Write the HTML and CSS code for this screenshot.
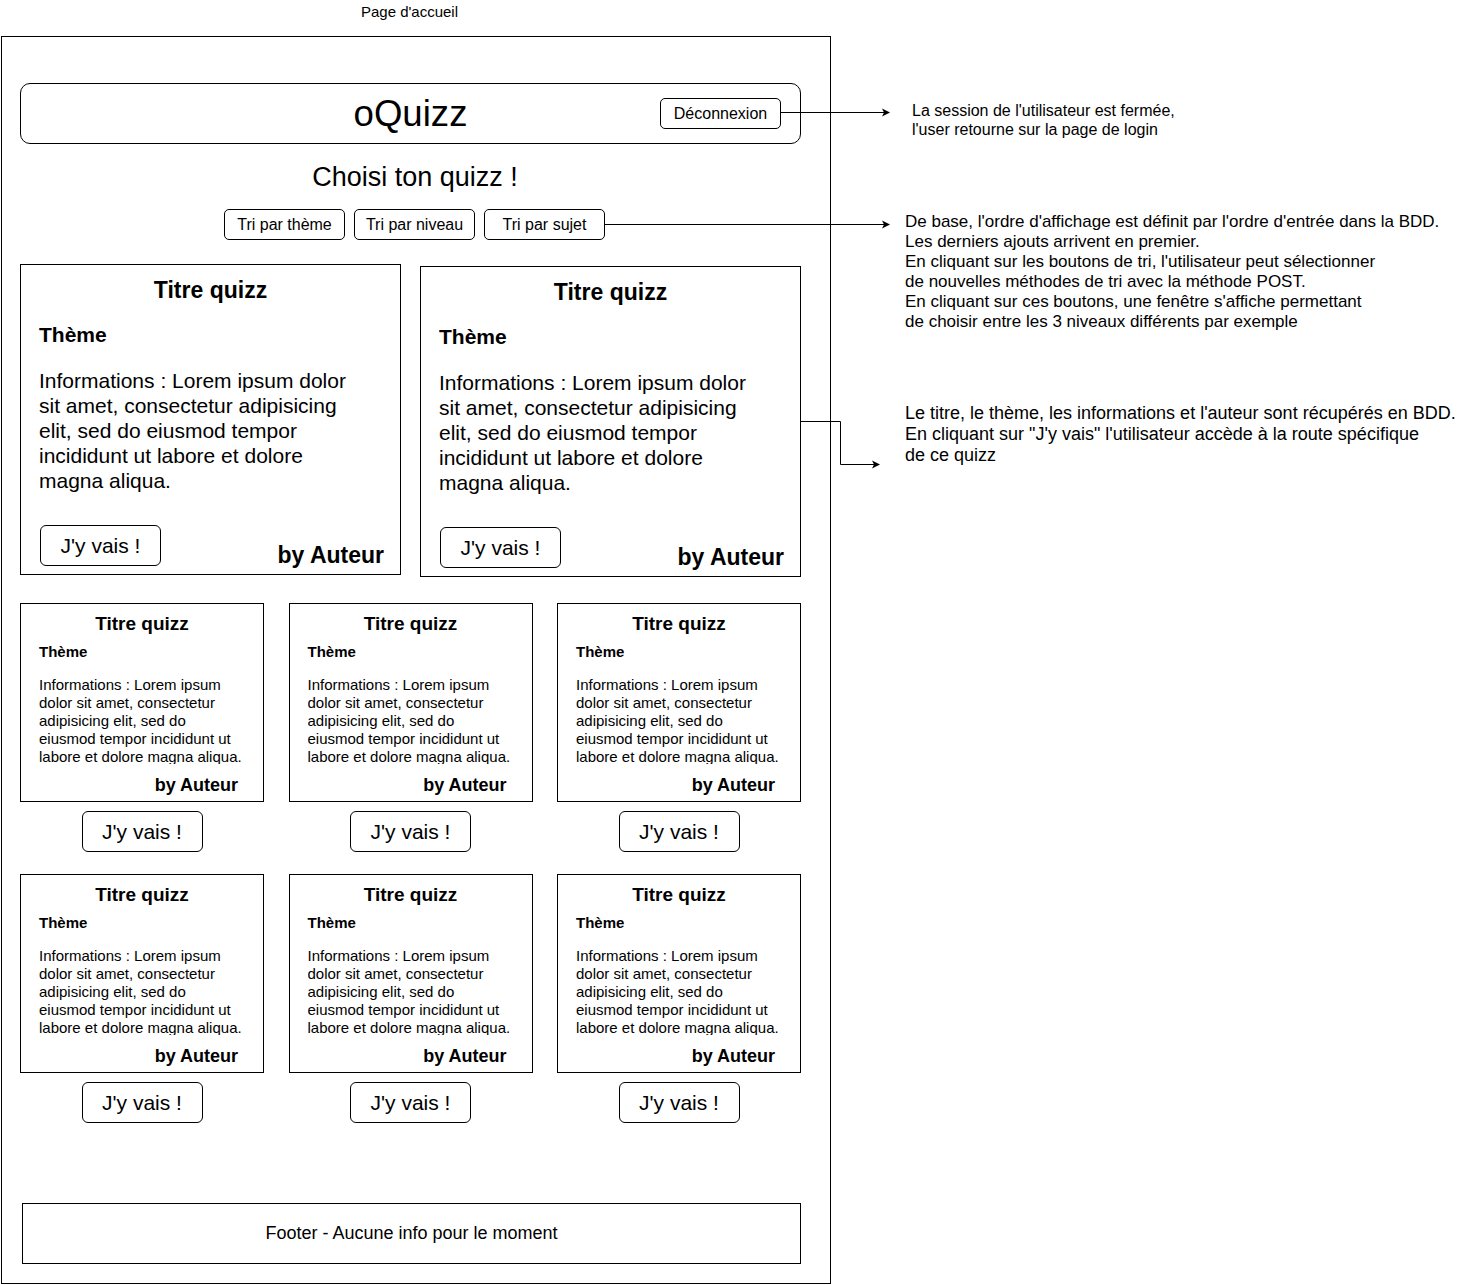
FILE: index.html
```html
<!DOCTYPE html>
<html lang="fr">
<head>
<meta charset="utf-8">
<title>Page d'accueil - oQuizz</title>
<link rel="stylesheet" href="styles.css">
</head>
<body>
<div class="canvas">
  <div class="page-label">Page d'accueil</div>

  <div class="frame">
    <header class="topbar">
      <span class="topbar-spacer"></span>
      <h1 class="logo">oQuizz</h1>
      <button class="btn btn-logout">Déconnexion</button>
    </header>

    <h2 class="choose">Choisi ton quizz !</h2>

    <div class="sorts">
      <button class="btn btn-sort">Tri par thème</button>
      <button class="btn btn-sort">Tri par niveau</button>
      <button class="btn btn-sort">Tri par sujet</button>
    </div>

    <div class="big-row">
      <article class="card-big">
        <h3 class="big-title">Titre quizz</h3>
        <h4 class="big-theme">Thème</h4>
        <p class="big-info">Informations : Lorem ipsum dolor sit amet, consectetur adipisicing elit, sed do eiusmod tempor incididunt ut labore et dolore magna aliqua.</p>
        <div class="big-foot">
          <button class="btn btn-go btn-go-in">J'y vais !</button>
          <span class="big-author">by Auteur</span>
        </div>
      </article>
      <article class="card-big card-big-low">
        <h3 class="big-title">Titre quizz</h3>
        <h4 class="big-theme">Thème</h4>
        <p class="big-info">Informations : Lorem ipsum dolor sit amet, consectetur adipisicing elit, sed do eiusmod tempor incididunt ut labore et dolore magna aliqua.</p>
        <div class="big-foot">
          <button class="btn btn-go btn-go-in">J'y vais !</button>
          <span class="big-author">by Auteur</span>
        </div>
      </article>
    </div>

    <div class="grid">
      <div class="cell">
        <article class="card-small">
          <h3 class="small-title">Titre quizz</h3>
          <h4 class="small-theme">Thème</h4>
          <p class="small-info">Informations : Lorem ipsum dolor sit amet, consectetur adipisicing elit, sed do eiusmod tempor incididunt ut labore et dolore magna aliqua.</p>
          <span class="small-author">by Auteur</span>
        </article>
        <button class="btn btn-go btn-go-out">J'y vais !</button>
      </div>
      <div class="cell">
        <article class="card-small">
          <h3 class="small-title">Titre quizz</h3>
          <h4 class="small-theme">Thème</h4>
          <p class="small-info">Informations : Lorem ipsum dolor sit amet, consectetur adipisicing elit, sed do eiusmod tempor incididunt ut labore et dolore magna aliqua.</p>
          <span class="small-author">by Auteur</span>
        </article>
        <button class="btn btn-go btn-go-out">J'y vais !</button>
      </div>
      <div class="cell">
        <article class="card-small">
          <h3 class="small-title">Titre quizz</h3>
          <h4 class="small-theme">Thème</h4>
          <p class="small-info">Informations : Lorem ipsum dolor sit amet, consectetur adipisicing elit, sed do eiusmod tempor incididunt ut labore et dolore magna aliqua.</p>
          <span class="small-author">by Auteur</span>
        </article>
        <button class="btn btn-go btn-go-out">J'y vais !</button>
      </div>
      <div class="cell">
        <article class="card-small">
          <h3 class="small-title">Titre quizz</h3>
          <h4 class="small-theme">Thème</h4>
          <p class="small-info">Informations : Lorem ipsum dolor sit amet, consectetur adipisicing elit, sed do eiusmod tempor incididunt ut labore et dolore magna aliqua.</p>
          <span class="small-author">by Auteur</span>
        </article>
        <button class="btn btn-go btn-go-out">J'y vais !</button>
      </div>
      <div class="cell">
        <article class="card-small">
          <h3 class="small-title">Titre quizz</h3>
          <h4 class="small-theme">Thème</h4>
          <p class="small-info">Informations : Lorem ipsum dolor sit amet, consectetur adipisicing elit, sed do eiusmod tempor incididunt ut labore et dolore magna aliqua.</p>
          <span class="small-author">by Auteur</span>
        </article>
        <button class="btn btn-go btn-go-out">J'y vais !</button>
      </div>
      <div class="cell">
        <article class="card-small">
          <h3 class="small-title">Titre quizz</h3>
          <h4 class="small-theme">Thème</h4>
          <p class="small-info">Informations : Lorem ipsum dolor sit amet, consectetur adipisicing elit, sed do eiusmod tempor incididunt ut labore et dolore magna aliqua.</p>
          <span class="small-author">by Auteur</span>
        </article>
        <button class="btn btn-go btn-go-out">J'y vais !</button>
      </div>
    </div>

    <footer class="footer">Footer - Aucune info pour le moment</footer>
  </div>

  <svg class="arrows" width="1474" height="1285" viewBox="0 0 1474 1285" aria-hidden="true">
    <g fill="none" stroke="#000" stroke-width="1">
      <path d="M780 112.5 H884"/>
      <path d="M604 224.5 H884"/>
      <path d="M800 421.5 H840.5 V464.5 H874"/>
    </g>
    <g fill="#000">
      <path d="M890 112.5 L882 108.5 L884 112.5 L882 116.5 Z"/>
      <path d="M890 224.5 L882 220.5 L884 224.5 L882 228.5 Z"/>
      <path d="M880 464.5 L872 460.5 L874 464.5 L872 468.5 Z"/>
    </g>
  </svg>

  <p class="note note-1">La session de l'utilisateur est fermée,<br>l'user retourne sur la page de login</p>
  <p class="note note-2">De base, l'ordre d'affichage est définit par l'ordre d'entrée dans la BDD.<br>Les derniers ajouts arrivent en premier.<br>En cliquant sur les boutons de tri, l'utilisateur peut sélectionner<br>de nouvelles méthodes de tri avec la méthode POST.<br>En cliquant sur ces boutons, une fenêtre s'affiche permettant<br>de choisir entre les 3 niveaux différents par exemple</p>
  <p class="note note-3">Le titre, le thème, les informations et l'auteur sont récupérés en BDD.<br>En cliquant sur "J'y vais" l'utilisateur accède à la route spécifique<br>de ce quizz</p>
</div>
</body>
</html>
```

FILE: styles.css
```css
* {
  box-sizing: border-box;
}

html,
body {
  margin: 0;
  padding: 0;
  background: #fff;
}

body {
  font-family: "Liberation Sans", Arial, Helvetica, sans-serif;
  color: #000;
}

.canvas {
  position: relative;
  width: 1474px;
  height: 1285px;
  overflow: hidden;
}

.page-label {
  width: 819px;
  height: 36px;
  padding-top: 3px;
  text-align: center;
  font-size: 15px;
  line-height: 18px;
}

/* ---------- main frame ---------- */
.frame {
  margin-left: 1px;
  width: 830px;
  height: 1248px;
  border: 1px solid #000;
  padding: 46px 0 19px 18px;
  display: flex;
  flex-direction: column;
}

.btn {
  font-family: inherit;
  color: #000;
  background: #fff;
  border: 1px solid #000;
  padding: 0;
  margin: 0;
  cursor: pointer;
}

.topbar {
  width: 781px;
  height: 61px;
  border: 1px solid #000;
  border-radius: 10px;
  display: grid;
  grid-template-columns: 1fr auto 1fr;
  align-items: center;
}

.logo {
  margin: 0;
  font-size: 36.6px;
  font-weight: normal;
  line-height: 42px;
}

.btn-logout {
  justify-self: end;
  margin-right: 19px;
  width: 121px;
  height: 31px;
  border-radius: 5px;
  font-size: 16px;
}

.choose {
  margin: 18px 0 0;
  width: 781px;
  padding-left: 9px;
  text-align: center;
  font-size: 27px;
  font-weight: normal;
  line-height: 31px;
}

.sorts {
  width: 781px;
  margin-top: 16px;
  padding-left: 8px;
  display: flex;
  justify-content: center;
  gap: 9px;
}

.btn-sort {
  width: 121px;
  height: 31px;
  border-radius: 5px;
  font-size: 16px;
}

/* ---------- big cards ---------- */
.big-row {
  margin-top: 24px;
  display: flex;
  align-items: flex-start;
  gap: 19px;
}

.card-big {
  width: 381px;
  height: 311px;
  border: 1px solid #000;
  padding: 11px 16px 0 18px;
  display: flex;
  flex-direction: column;
}

.card-big-low {
  margin-top: 2px;
}

.big-title {
  margin: 0 0 0 -2px;
  text-align: center;
  font-size: 23px;
  font-weight: bold;
  line-height: 28px;
}

.big-theme {
  margin: 18px 0 0;
  font-size: 21px;
  font-weight: bold;
  line-height: 25px;
}

.big-info {
  margin: 21px 0 0;
  width: 320px;
  font-size: 21px;
  line-height: 25px;
}

.big-foot {
  margin-top: auto;
  padding-bottom: 8px;
  display: flex;
  justify-content: space-between;
  align-items: flex-end;
}

.btn-go {
  width: 121px;
  height: 41px;
  border-radius: 6px;
  font-size: 21px;
}

.btn-go-in {
  margin-left: 1px;
}

.big-author {
  margin-bottom: -3px;
  font-size: 23px;
  font-weight: bold;
  line-height: 28px;
}

/* ---------- small cards ---------- */
.grid {
  width: 781px;
  margin-top: 26px;
  display: grid;
  grid-template-columns: repeat(3, 244px);
  justify-content: space-between;
  row-gap: 22px;
}

.cell {
  display: flex;
  flex-direction: column;
  align-items: center;
}

.card-small {
  width: 244px;
  height: 199px;
  border: 1px solid #000;
  padding: 9px 0 0 18px;
  display: flex;
  flex-direction: column;
}

.small-title {
  margin: 0 0 0 -18px;
  text-align: center;
  font-size: 19px;
  font-weight: bold;
  line-height: 22px;
}

.small-theme {
  margin: 8px 0 0;
  font-size: 15px;
  font-weight: bold;
  line-height: 18px;
}

.small-info {
  margin: 15px 0 0;
  width: 207px;
  height: 88px;
  overflow: hidden;
  font-size: 15px;
  line-height: 18px;
}

.small-author {
  margin-top: 10px;
  margin-right: 25px;
  align-self: flex-end;
  font-size: 18px;
  font-weight: bold;
  line-height: 22px;
}

.btn-go-out {
  margin-top: 9px;
}

/* ---------- footer ---------- */
.footer {
  margin-top: auto;
  margin-left: 2px;
  width: 779px;
  height: 61px;
  border: 1px solid #000;
  display: flex;
  align-items: center;
  justify-content: center;
  font-size: 18px;
}

/* ---------- annotations (diagram layer) ---------- */
.arrows {
  position: absolute;
  left: 0;
  top: 0;
  pointer-events: none;
}

.note {
  position: absolute;
  margin: 0;
  white-space: nowrap;
}

.note-1 {
  left: 912px;
  top: 101px;
  font-size: 16px;
  line-height: 19px;
}

.note-2 {
  left: 905px;
  top: 212px;
  font-size: 17px;
  line-height: 20px;
}

.note-3 {
  left: 905px;
  top: 403px;
  font-size: 18px;
  line-height: 21px;
}
```
